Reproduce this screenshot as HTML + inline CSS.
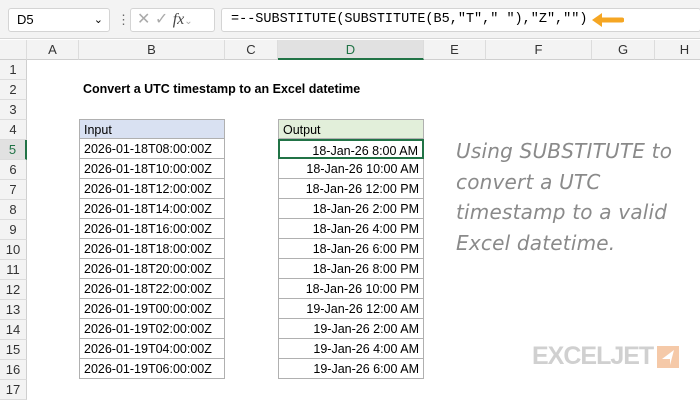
<!DOCTYPE html>
<html><head><style>
*{margin:0;padding:0;box-sizing:border-box}
body{width:700px;height:400px;overflow:hidden;background:#fff;font-family:"Liberation Sans",sans-serif;font-size:12.5px;color:#000;position:relative}
.a{position:absolute}
.bar{left:0;top:0;width:700px;height:39px;background:#f3f3f3;border-bottom:1px solid #d6d6d6}
.box{background:#fff;border:1px solid #d4d4d4;border-radius:3px}
.ch{top:40px;height:20px;background:#f3f3f3;border-bottom:1px solid #cfcfcf;border-right:1px solid #dcdcdc;text-align:center;line-height:20px;color:#333;font-size:13px}
.rh{left:0;width:27px;height:20px;background:#f3f3f3;border-bottom:1px solid #dcdcdc;border-right:1px solid #cfcfcf;text-align:center;line-height:20px;color:#333;font-size:13px}
.c{height:20px;line-height:20px;border:1px solid #b0b0b0;border-top:none;padding:0 4px;font-size:12.5px;white-space:nowrap}
</style></head><body>
<div class="a bar"></div>
<div class="a box" style="left:8px;top:8px;width:102px;height:24px;line-height:22px;padding-left:8px;font-size:13px">D5<span style="position:absolute;right:6px;top:0;font-size:11px">&#8964;</span></div>
<div class="a" style="left:117px;top:12px;color:#666;font-size:13px">&#8942;</div>
<div class="a box" style="left:130px;top:8px;width:85px;height:24px;color:#aaa;font-size:16px;line-height:22px;padding-left:6px">&#10005;&nbsp;&#10003;&nbsp;<i style="font-family:'Liberation Serif';color:#444">fx</i><span style="font-size:10px">&#8964;</span></div>
<div class="a box" style="left:221px;top:8px;width:480px;height:24px;line-height:22px;padding-left:9px;font-family:'Liberation Mono',monospace;font-size:13.5px">=--SUBSTITUTE(SUBSTITUTE(B5,"T"," "),"Z","")</div>
<svg class="a" style="left:588px;top:12px" width="36" height="16"><path d="M34 8H12" stroke="#f5a623" stroke-width="5" stroke-linecap="round"/><path d="M14 1L4 8L14 15Z" fill="#f5a623"/></svg>
<div class="a ch" style="left:0;width:27px"></div>
<div class="a ch" style="left:27px;width:52px">A</div>
<div class="a ch" style="left:79px;width:146px">B</div>
<div class="a ch" style="left:225px;width:53px">C</div>
<div class="a ch" style="left:278px;width:146px;background:#e1e1e1;border-bottom:2px solid #217346;color:#217346">D</div>
<div class="a ch" style="left:424px;width:62px">E</div>
<div class="a ch" style="left:486px;width:106px">F</div>
<div class="a ch" style="left:592px;width:63px">G</div>
<div class="a ch" style="left:655px;width:60px">H</div>
<div class="a rh" style="top:60px">1</div><div class="a rh" style="top:80px">2</div><div class="a rh" style="top:100px">3</div><div class="a rh" style="top:120px">4</div>
<div class="a rh" style="top:140px;background:#e1e1e1;color:#217346;border-right:2px solid #217346">5</div>
<div class="a rh" style="top:160px">6</div><div class="a rh" style="top:180px">7</div><div class="a rh" style="top:200px">8</div><div class="a rh" style="top:220px">9</div><div class="a rh" style="top:240px">10</div><div class="a rh" style="top:260px">11</div><div class="a rh" style="top:280px">12</div><div class="a rh" style="top:300px">13</div><div class="a rh" style="top:320px">14</div><div class="a rh" style="top:340px">15</div><div class="a rh" style="top:360px">16</div><div class="a rh" style="top:380px">17</div>
<div class="a" style="left:83px;top:82px;font-weight:bold;font-size:12.5px">Convert a UTC timestamp to an Excel datetime</div>
<div class="a" style="left:79px;top:119px;width:146px">
<div class="c" style="background:#d9e1f2;border-top:1px solid #b0b0b0">Input</div>
<div class="c">2026-01-18T08:00:00Z</div><div class="c">2026-01-18T10:00:00Z</div><div class="c">2026-01-18T12:00:00Z</div><div class="c">2026-01-18T14:00:00Z</div><div class="c">2026-01-18T16:00:00Z</div><div class="c">2026-01-18T18:00:00Z</div><div class="c">2026-01-18T20:00:00Z</div><div class="c">2026-01-18T22:00:00Z</div><div class="c">2026-01-19T00:00:00Z</div><div class="c">2026-01-19T02:00:00Z</div><div class="c">2026-01-19T04:00:00Z</div><div class="c">2026-01-19T06:00:00Z</div>
</div>
<div class="a" style="left:278px;top:119px;width:146px;text-align:right">
<div class="c" style="background:#e2efda;border-top:1px solid #b0b0b0;text-align:left">Output</div>
<div class="c" style="border:2px solid #217346">18-Jan-26 8:00 AM</div><div class="c">18-Jan-26 10:00 AM</div><div class="c">18-Jan-26 12:00 PM</div><div class="c">18-Jan-26 2:00 PM</div><div class="c">18-Jan-26 4:00 PM</div><div class="c">18-Jan-26 6:00 PM</div><div class="c">18-Jan-26 8:00 PM</div><div class="c">18-Jan-26 10:00 PM</div><div class="c">19-Jan-26 12:00 AM</div><div class="c">19-Jan-26 2:00 AM</div><div class="c">19-Jan-26 4:00 AM</div><div class="c">19-Jan-26 6:00 AM</div>
</div>
<div class="a" style="left:456px;top:136px;width:240px;font-size:20px;line-height:30.5px;color:#8a8a8a;font-family:'DejaVu Sans',sans-serif;font-style:italic;letter-spacing:0.2px">Using SUBSTITUTE to convert a UTC timestamp to a valid Excel datetime.</div>
<div class="a" style="left:532px;top:342px;font-size:25px;font-weight:bold;color:#d0d0d0;letter-spacing:-1px">EXCELJET</div>
<div class="a" style="left:657px;top:346px;width:22px;height:22px;background:#f5c9a8"><svg width="22" height="22"><path d="M17 4L5 13L13 13L13 19Z" fill="#fff"/></svg></div>
</body></html>
